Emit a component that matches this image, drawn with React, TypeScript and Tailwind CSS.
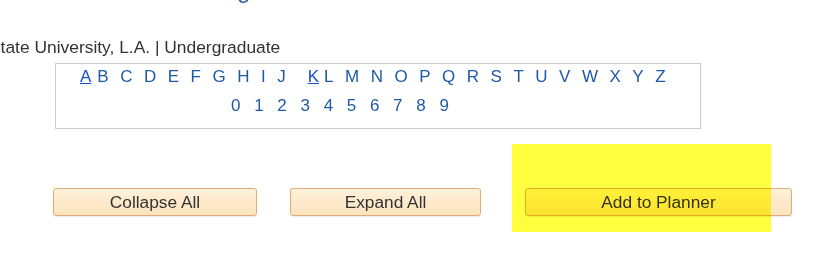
import React from "react";

const letters = "ABCDEFGHIJKLMNOPQRSTUVWXYZ".split("");
const digits = "0123456789".split("");

function Btn({ label, w }: { label: string; w: string }) {
  return (
    <button
      className={`${w} h-[28px] rounded-[3px] border border-[#e2ac78] bg-gradient-to-b from-[#fff1da] to-[#fce3bd] text-[17.3px] leading-[19px] text-[#333] shadow-[0_1px_1px_rgba(0,0,0,0.08)]`}
    >
      {label}
    </button>
  );
}

export default function App() {
  return (
    <div className="relative w-[818px] h-[258px] bg-white overflow-hidden font-['Liberation_Sans',Arial,sans-serif]">
      <div className="h-[4px] overflow-hidden">
        <div className="-mt-[24px] pl-[237px] text-[24px] leading-[28px] text-[#2d5d9c]">g</div>
      </div>
      <div className="mt-[34px] -ml-[11px] text-[17.4px] leading-[19px] text-[#333] whitespace-nowrap">
        State University, L.A. | Undergraduate
      </div>
      <div className="ml-[55px] mt-[6px] w-[646px] h-[66px] border border-[#c9cdd3] text-[17px] leading-[19px] text-[#1f5aa6]">
        <div className="flex pl-[24px] pt-[3px]">
          {letters.map((l, i) => (
            <span
              key={l}
              className={
                l === "A"
                  ? "underline text-[#1652c4] mr-[6px]"
                  : l === "K"
                  ? "underline text-[#1652c4] mr-[5px]"
                  : l === "J"
                  ? "mr-[22px]"
                  : i === 25
                  ? ""
                  : "mr-[11.5px]"
              }
            >
              {l}
            </span>
          ))}
        </div>
        <div className="flex pl-[175px] pt-[10px] gap-[13.7px]">
          {digits.map((d) => (
            <span key={d}>{d}</span>
          ))}
        </div>
      </div>
      <div className="flex mt-[59px] ml-[53px]">
        <Btn label="Collapse All" w="w-[204px]" />
        <div className="ml-[33px]">
          <Btn label="Expand All" w="w-[191px]" />
        </div>
        <div className="ml-[44px]">
          <Btn label="Add to Planner" w="w-[267px]" />
        </div>
      </div>
      <div className="absolute left-[512px] top-[144px] w-[259px] h-[88px] bg-[#ffff40] mix-blend-multiply pointer-events-none" />
    </div>
  );
}
